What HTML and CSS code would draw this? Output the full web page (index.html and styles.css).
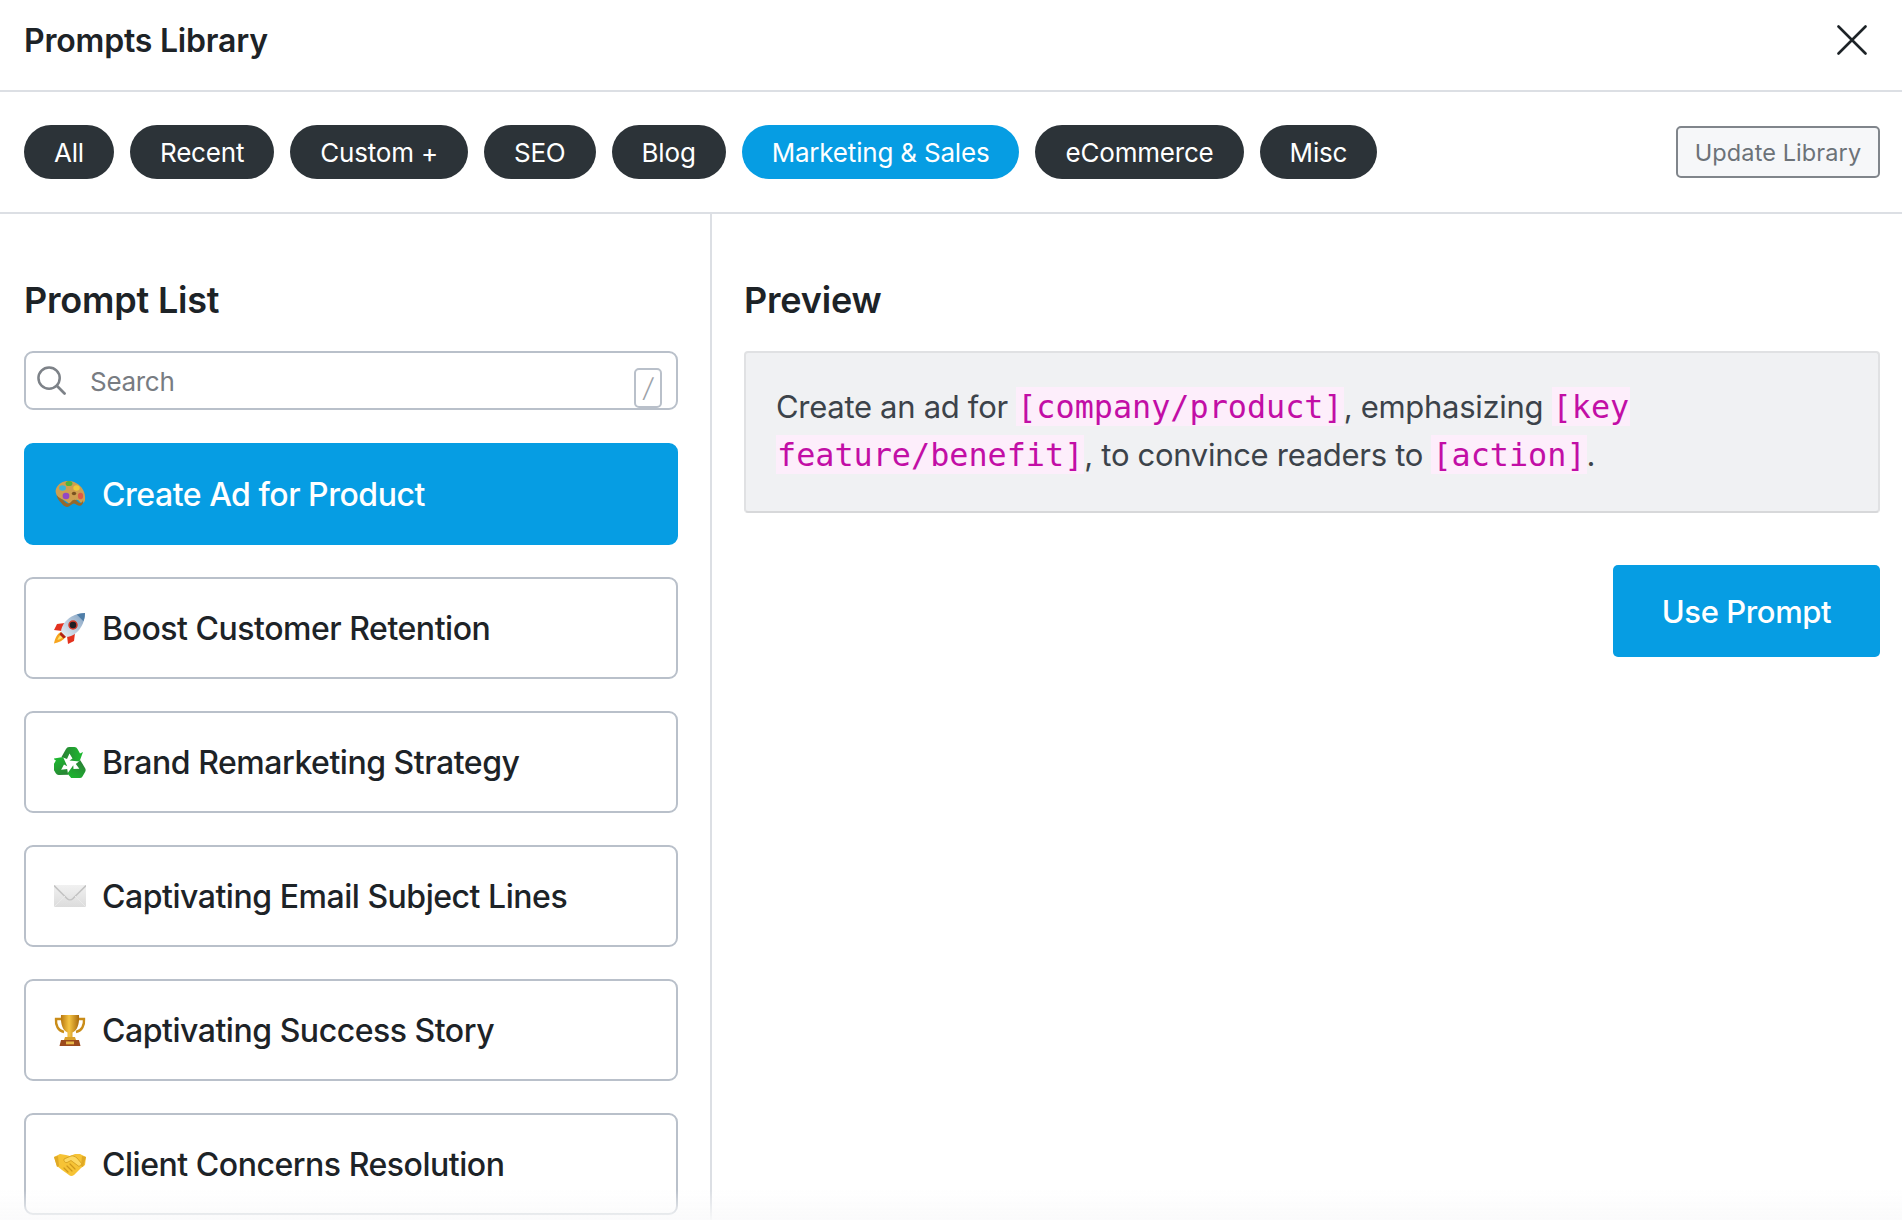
FILE: index.html
```html
<!DOCTYPE html>
<html lang="en">
<head>
    <meta charset="UTF-8">
    <title>Prompts Library</title>
    <link rel="stylesheet" href="styles.css">
</head>
<body>
    <svg class="defs" width="0" height="0" aria-hidden="true">
        <defs>
            <linearGradient id="gold" x1="0" y1="0" x2="1" y2="0">
                <stop offset="0" stop-color="#b8770f"/>
                <stop offset=".45" stop-color="#f6c544"/>
                <stop offset="1" stop-color="#a96a0c"/>
            </linearGradient>
            <linearGradient id="mail" x1="0" y1="0" x2="0" y2="1">
                <stop offset="0" stop-color="#f1f1f1"/>
                <stop offset="1" stop-color="#dcdcdc"/>
            </linearGradient>
            <linearGradient id="body-rocket" x1="0" y1="1" x2="1" y2="0">
                <stop offset="0" stop-color="#eef2f6"/>
                <stop offset="1" stop-color="#7c9dbf"/>
            </linearGradient>
            <linearGradient id="green" x1="0" y1="0" x2="1" y2="0">
                <stop offset="0" stop-color="#2a7f35"/>
                <stop offset="1" stop-color="#1cbb2f"/>
            </linearGradient>
        </defs>
    </svg>

    <header class="top">
        <h1>Prompts Library</h1>
        <button class="close" type="button" aria-label="Close">
            <svg viewBox="0 0 30 30" width="30" height="30"><path d="M1.5 1.5l27 27M28.5 1.5l-27 27" fill="none" stroke="#1d2327" stroke-width="2.6" stroke-linecap="round"/></svg>
        </button>
    </header>

    <nav class="tabs">
        <a class="pill">All</a>
        <a class="pill">Recent</a>
        <a class="pill">Custom +</a>
        <a class="pill">SEO</a>
        <a class="pill">Blog</a>
        <a class="pill active">Marketing &amp; Sales</a>
        <a class="pill">eCommerce</a>
        <a class="pill">Misc</a>
        <button class="update" type="button">Update Library</button>
    </nav>

    <main class="columns">
        <section class="left">
            <h2>Prompt List</h2>
            <div class="search">
                <svg class="search-icon" viewBox="0 0 30 30" width="29" height="29"><circle cx="12.5" cy="12.5" r="11" fill="none" stroke="#7d8288" stroke-width="2.6"/><path d="M20.5 20.5l8 8" stroke="#7d8288" stroke-width="2.8" stroke-linecap="round"/></svg>
                <input type="text" placeholder="Search">
                <span class="key">/</span>
            </div>

            <ul class="prompts">
                <li class="prompt selected">
                    <svg class="emoji" viewBox="0 0 32 32" width="32" height="32">
                        <path d="M2 11C5 3 15 1 22 5c6 3 10 10 9 17-.5 3-3 4-5 2-2-3-5-3-7 0-2 2-4 2-6 0C9 21 5 21 3 18c-1-2-2-5-1-7z" fill="#cf9f50"/>
                        <path d="M2.500 17c2 3 6.500 4 8.500 7 2 2 4 2 6 0 2-3 5-3 7 0 2 2 4.500 1 5-2 1 5-3 7-6 5-2-2-4-2-6 0-3 3-6 2-8 0-2-3-5-4-6.500-10z" fill="#96682a"/>
                        <ellipse cx="8.500" cy="10" rx="3.400" ry="2.800" fill="#3bb4d8"/>
                        <ellipse cx="15" cy="5.500" rx="3.400" ry="2.600" fill="#4fb33c"/>
                        <ellipse cx="22.500" cy="10" rx="3.200" ry="2.700" fill="#efc93a"/>
                        <ellipse cx="26.500" cy="18" rx="2.600" ry="3.200" fill="#dc5a48"/>
                        <ellipse cx="12" cy="18" rx="3.400" ry="3.200" fill="#9347c4"/>
                        <ellipse cx="20" cy="15.500" rx="2.200" ry="1.800" fill="#7a5220"/>
                    </svg>
                    <span>Create Ad for Product</span>
                </li>
                <li class="prompt">
                    <svg class="emoji" viewBox="0 0 32 32" width="32" height="32">
                        <path d="M11 11L3 12 0 18l8 1zM21 21l-1 8-6 3-1-8z" fill="#e3321f"/>
                        <path d="M7 20c-4 2-6 6-7 11.500 5-1 9-3 12-7z" fill="#f7a51e"/>
                        <path d="M7 23c-2 1-3 3-3.500 5 2-.5 4-1.500 5.500-3z" fill="#fbe36a"/>
                        <path d="M31 1c-7 0-15 3-20 9-2.500 3-4 7-4 10l5 5c3 0 7-1.500 10-4C28 16 31 8 31 1z" fill="url(#body-rocket)"/>
                        <path d="M31 1c-2.700 0-5.500.5-8.200 1.500l6.700 6.700C30.500 6.500 31 3.700 31 1z" fill="#4f7ea8"/>
                        <path d="M7 20l5 5-2.500 1.500L5.500 22.500z" fill="#b32015"/>
                        <circle cx="19" cy="13" r="4" fill="#1f1f24" stroke="#d43a2a" stroke-width="1.500"/>
                    </svg>
                    <span>Boost Customer Retention</span>
                </li>
                <li class="prompt">
                    <svg class="emoji" viewBox="0 0 32 32" width="32" height="32">
                        <path id="recycle-arrow" d="M7.500 11L12 3Q13 1 15 1H20.500Q22.500 1 23.500 3L26 7.500 29 6 25.500 15.500 15.500 14.500 18.500 12.500 15.500 7.500 13 13z" fill="url(#green)"/>
                        <use href="#recycle-arrow" transform="rotate(120 16 18)"/>
                        <use href="#recycle-arrow" transform="rotate(240 16 18)"/>
                    </svg>
                    <span>Brand Remarketing Strategy</span>
                </li>
                <li class="prompt">
                    <svg class="emoji" viewBox="0 0 32 32" width="32" height="32">
                        <rect x="0" y="5" width="32" height="22" rx="1" fill="url(#mail)"/>
                        <path d="M0 5.500l13 13c1.700 1.700 4.300 1.700 6 0l13-13" fill="none" stroke="#c3c3c3" stroke-width="1.600"/>
                        <path d="M0 27l11-11M32 27L21 16" stroke="#e9e9e9" stroke-width="1"/>
                    </svg>
                    <span>Captivating Email Subject Lines</span>
                </li>
                <li class="prompt">
                    <svg class="emoji" viewBox="0 0 32 32" width="32" height="32">
                        <path d="M7 5H2c-.5 6 2 12 8 13M25 5h5c.5 6-2 12-8 13" fill="none" stroke="#c98c18" stroke-width="2.400"/>
                        <path d="M7 1h18c.5 8-1 15-6.500 17.500V23h-5v-4.500C8 16 6.500 9 7 1z" fill="url(#gold)"/>
                        <path d="M11 23h10l1 3H10z" fill="#d9a02a"/>
                        <path d="M7 26h18l1.500 6h-21z" fill="#9c4a1c"/>
                        <rect x="12" y="27.500" width="8" height="2.800" fill="#e9b949"/>
                    </svg>
                    <span>Captivating Success Story</span>
                </li>
                <li class="prompt">
                    <svg class="emoji" viewBox="0 0 32 32" width="32" height="32">
                        <path d="M0 9l6-3 6 1 4 1 5-2 5 0 6 3-1 8-4 3-7 7c-2 1.500-4 1-5 0l-7-5-5-4z" fill="#f6c335"/>
                        <path d="M10 11l7-3c2-.5 4 .5 6 2l5 6-3 2.500-8-6-4 2c-2 .5-3.500-1.500-3-3.500z" fill="#fcd862" stroke="#d19a1c" stroke-width=".8"/>
                        <path d="M10 20l4 4M13 18l5 5M16 16l5 5" stroke="#cf981b" stroke-width="1.200" stroke-linecap="round"/>
                        <path d="M0 9l3 10 2-1-1-10zM32 9l-3 10-2-1 1-10z" fill="#e0a925"/>
                    </svg>
                    <span>Client Concerns Resolution</span>
                </li>
            </ul>
        </section>

        <section class="right">
            <h2>Preview</h2>
            <div class="preview">
                Create an ad for <code>[company/product]</code>, emphasizing <code>[key</code> <code>feature/benefit]</code>, to convince readers to <code>[action]</code>.
            </div>
            <div class="actions">
                <button class="use" type="button">Use Prompt</button>
            </div>
        </section>
    </main>

    <div class="fade"></div>
</body>
</html>
```

FILE: styles.css
```css
/* Page */
html, body {
    height: 100%;
    overflow: hidden;
}

body {
    margin: 0;
    background: #fff;
    color: #1d2327;
    font-family: Inter, "Liberation Sans", sans-serif;
}

.defs {
    position: absolute;
}

/* Header */
.top {
    display: flex;
    align-items: center;
    justify-content: space-between;
    box-sizing: border-box;
    height: 92px;
    padding: 0 35px 10px 24px;
    border-bottom: 2px solid #dcdfe4;
}

h1 {
    margin: 0;
    font-size: 32px;
    font-weight: 600;
    letter-spacing: -0.2px;
}

.close {
    display: flex;
    padding: 0;
    border: 0;
    background: none;
}

/* Tabs */
.tabs {
    display: flex;
    align-items: center;
    gap: 16px;
    box-sizing: border-box;
    height: 122px;
    padding: 0 22px 1px 24px;
    border-bottom: 2px solid #dcdfe4;
}

.pill {
    display: flex;
    align-items: center;
    box-sizing: border-box;
    height: 54px;
    padding: 2px 30px 0;
    border-radius: 27px;
    background: #2c3338;
    color: #fff;
    font-size: 26px;
    letter-spacing: -0.19px;
}

.pill.active {
    background: #069de3;
}

.update {
    margin-left: auto;
    width: 204px;
    height: 52px;
    padding: 2px 0 0;
    border: 2px solid #80858b;
    border-radius: 5px;
    background: #f6f7f9;
    color: #6c7278;
    font-family: inherit;
    font-size: 23.5px;
    letter-spacing: 0.1px;
}

/* Columns */
.columns {
    display: flex;
    height: 1006px;
}

.left {
    box-sizing: border-box;
    width: 712px;
    padding: 0 32px 0 24px;
    border-right: 2px solid #dcdfe4;
}

.right {
    flex: 1;
    padding: 0 22px 0 32px;
}

h2 {
    margin: 0;
    padding: 61px 0 0;
    height: 76px;
    font-size: 36px;
    line-height: 50px;
    font-weight: 600;
    letter-spacing: -0.2px;
}

/* Search */
.search {
    display: flex;
    align-items: center;
    box-sizing: border-box;
    height: 59px;
    padding: 0 14px 0 11px;
    border: 2px solid #b9c0ca;
    border-radius: 9px;
}

.search-icon {
    flex: none;
}

.search input {
    flex: 1;
    min-width: 0;
    margin: 2px 0 0 24px;
    padding: 0;
    border: 0;
    outline: none;
    background: none;
    font-family: inherit;
    font-size: 26px;
    letter-spacing: -0.3px;
}

.search input::placeholder {
    color: #787c82;
    opacity: 1;
}

.key {
    flex: none;
    display: flex;
    align-items: center;
    justify-content: center;
    box-sizing: border-box;
    width: 28px;
    height: 40px;
    margin-top: 14px;
    border: 2px solid #b9c0ca;
    border-radius: 5px;
    color: #9ca2a9;
    font-size: 26px;
    font-style: italic;
    font-weight: 300;
}

/* Prompt list */
.prompts {
    display: flex;
    flex-direction: column;
    gap: 32px;
    margin: 33px 0 0;
    padding: 0;
    list-style: none;
}

.prompt {
    display: flex;
    align-items: center;
    gap: 16px;
    box-sizing: border-box;
    height: 102px;
    padding: 0 28px;
    border: 2px solid #b9c0ca;
    border-radius: 9px;
    font-size: 32px;
    font-weight: 500;
    letter-spacing: -0.47px;
}

.prompt.selected {
    border-color: #069de3;
    background: #069de3;
    color: #fff;
}

.emoji {
    flex: none;
}

/* Preview */
.preview {
    box-sizing: border-box;
    height: 162px;
    padding: 30px 30px;
    border: 2px solid #e0e1e3;
    border-bottom-color: #d7d8da;
    border-radius: 4px;
    background: #f0f1f3;
    color: #3c434a;
    font-size: 31px;
    line-height: 48px;
    letter-spacing: -0.3px;
}

code {
    padding: 1px 1px;
    background: #fdeefb;
    color: #c20ea6;
    font-family: "DejaVu Sans Mono", monospace;
    font-size: 31.8px;
    letter-spacing: 0;
}

.actions {
    display: flex;
    justify-content: flex-end;
    margin-top: 52px;
}

.use {
    width: 267px;
    height: 92px;
    padding: 0;
    border: 0;
    border-radius: 5px;
    background: #069de3;
    color: #fff;
    font-family: inherit;
    font-size: 31px;
    font-weight: 500;
    letter-spacing: -0.4px;
}

/* faint fade over the bottom edge */
.fade {
    position: fixed;
    left: 0;
    right: 0;
    bottom: 0;
    height: 30px;
    background: linear-gradient(to bottom, rgba(250, 250, 251, 0), rgba(250, 250, 251, 0.9));
    pointer-events: none;
}
```
